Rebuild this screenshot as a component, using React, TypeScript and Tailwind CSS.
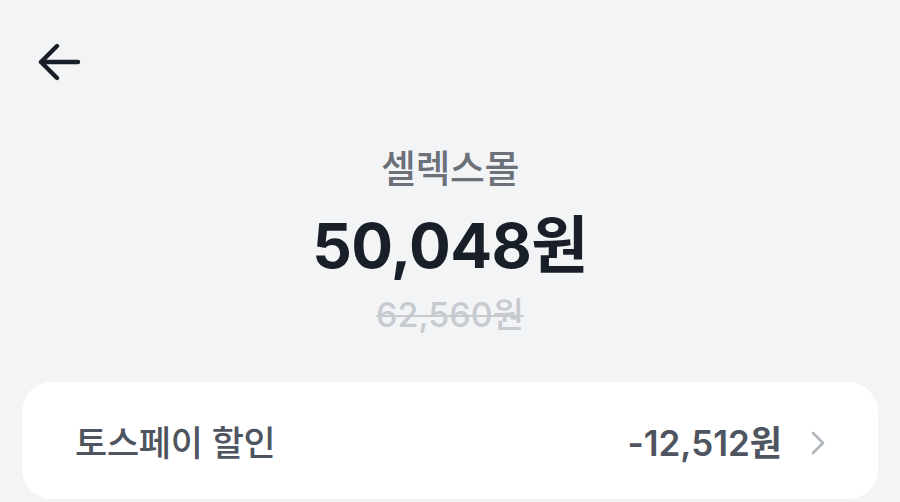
import React from "react";

const font = { fontFamily: 'Inter, "Noto Sans CJK KR", sans-serif' };

function BackArrow() {
  return (
    <svg width="44" height="38" viewBox="0 0 44 38" fill="none">
      <path
        d="M41 19H4M20 3L4 19l16 16"
        stroke="#191f28"
        strokeWidth="4.4"
        strokeLinecap="round"
        strokeLinejoin="round"
      />
    </svg>
  );
}

function Chevron() {
  return (
    <svg width="16" height="26" viewBox="0 0 16 26" fill="none">
      <path
        d="M3 3l10 10L3 23"
        stroke="#b0b6bd"
        strokeWidth="2.6"
        strokeLinecap="round"
        strokeLinejoin="round"
      />
    </svg>
  );
}

export default function App() {
  return (
    <div
      className="w-[900px] h-[502px] overflow-hidden bg-[#f3f4f6] flex flex-col"
      style={font}
    >
      <div className="shrink-0 pl-[37px] pt-[43px] h-[146px]">
        <BackArrow />
      </div>
      <div className="shrink-0 flex flex-col items-center">
        <div className="text-[38px] leading-[44px] font-medium text-[#6b7079] tracking-[-0.5px]">
          셀렉스몰
        </div>
        <div className="mt-[21px] text-[62px] leading-[70px] font-bold text-[#191f28] tracking-[-0.6px]">
          50,048원
        </div>
        <div className="mt-[14px] text-[34px] leading-[40px] font-medium text-[#c7cacf] line-through decoration-[2px]">
          62,560원
        </div>
      </div>
      <div className="mt-[47px] mx-[22px] h-[117px] shrink-0 rounded-[30px] bg-white flex items-start pl-[53px] pr-[52px] pt-[39px]">
        <div className="flex-1 text-[35px] leading-[44px] font-medium text-[#4e5560] tracking-[-0.3px]">
          토스페이 할인
        </div>
        <div className="flex items-center gap-[28px]">
          <span className="text-[35px] leading-[44px] font-semibold text-[#4e5560]">
            -12,512원
          </span>
          <Chevron />
        </div>
      </div>
    </div>
  );
}
